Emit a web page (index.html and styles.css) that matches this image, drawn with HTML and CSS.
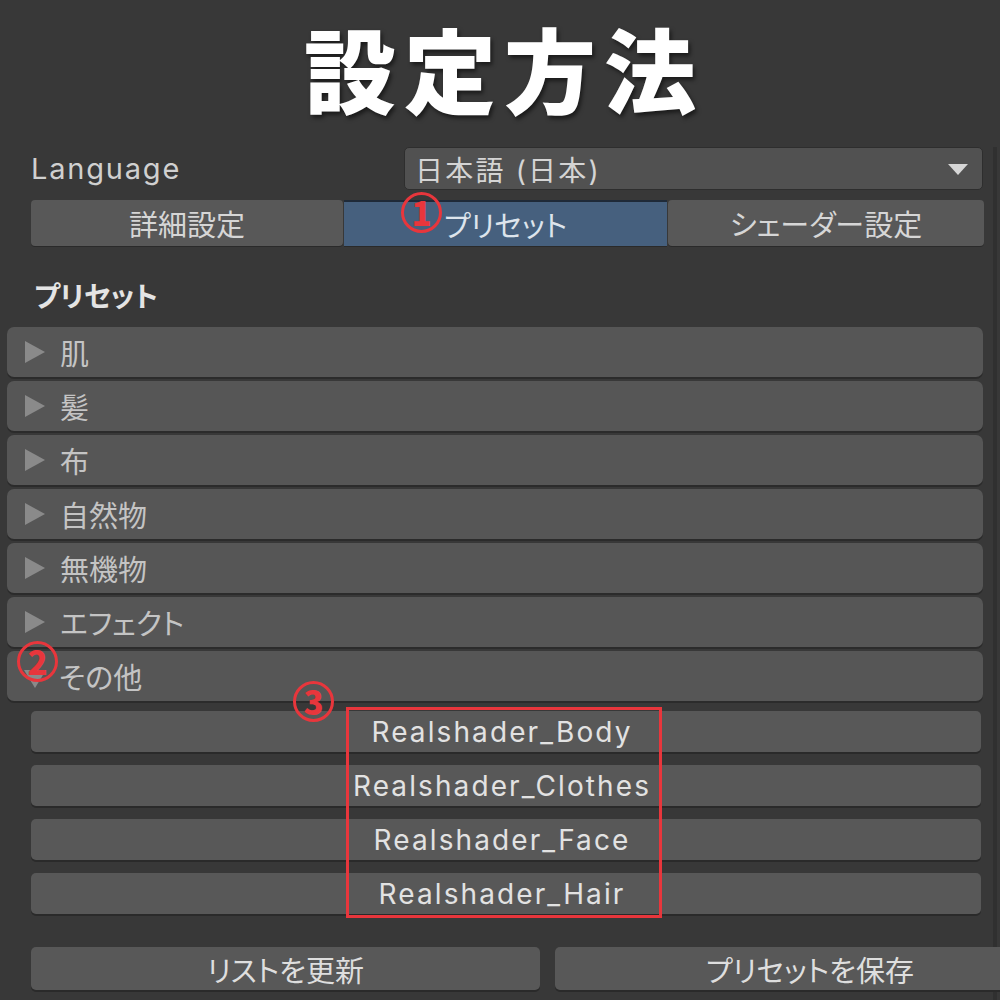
FILE: index.html
```html
<!DOCTYPE html>
<html lang="ja">
<head>
    <meta charset="UTF-8">
    <title>設定方法</title>
    <link rel="stylesheet" href="styles.css">
</head>
<body>
    <div class="page">
        <h1 class="title">設定方法</h1>

        <div class="inspector">
            <div class="lang-row">
                <span class="lang-label">Language</span>
                <div class="dropdown">
                    <span>日本語 (日本)</span>
                    <span class="caret"></span>
                </div>
            </div>

            <div class="tabs">
                <div class="tab">詳細設定</div>
                <div class="tab active">プリセット<span class="mark mark-1">1</span></div>
                <div class="tab">シェーダー設定</div>
            </div>

            <div class="section-title">プリセット</div>

            <div class="foldouts">
                <div class="foldout"><span class="arrow"></span>肌</div>
                <div class="foldout"><span class="arrow"></span>髪</div>
                <div class="foldout"><span class="arrow"></span>布</div>
                <div class="foldout"><span class="arrow"></span>自然物</div>
                <div class="foldout"><span class="arrow"></span>無機物</div>
                <div class="foldout"><span class="arrow"></span>エフェクト</div>
                <div class="foldout open"><span class="arrow"></span>その他<span class="mark mark-2">2</span></div>
            </div>

            <div class="presets">
                <div class="preset-btn">Realshader_Body</div>
                <div class="preset-btn">Realshader_Clothes</div>
                <div class="preset-btn">Realshader_Face</div>
                <div class="preset-btn">Realshader_Hair</div>
                <div class="highlight"><span class="mark mark-3">3</span></div>
            </div>

            <div class="actions">
                <div class="action-btn">リストを更新</div>
                <div class="action-btn">プリセットを保存</div>
            </div>
        </div>
    </div>
</body>
</html>
```

FILE: styles.css
```css
* {
    margin: 0;
    padding: 0;
    box-sizing: border-box;
}

html, body {
    width: 1000px;
    height: 1000px;
    overflow: hidden;
}

body {
    font-family: Inter, "Noto Sans CJK JP", sans-serif;
    font-feature-settings: "palt";
    background-color: #383838;
    color: #d2d2d2;
}

.page {
    width: 1000px;
    height: 1000px;
    overflow: hidden;
}

.title {
    height: 140px;
    padding-left: 8px;
    text-align: center;
    font-family: "Noto Sans CJK JP", sans-serif;
    font-feature-settings: normal;
    font-size: 92px;
    line-height: 1.45;
    font-weight: 900;
    letter-spacing: 8px;
    color: #ffffff;
    text-shadow: 2px 3px 4px rgba(0, 0, 0, 0.55);
}

.inspector {
    width: 997px;
    height: 860px;
    padding: 0 10px 0 7px;
    border-right: 4px solid #303030;
}

.lang-row {
    display: flex;
    align-items: center;
    margin: 7px 0 0 24px;
    height: 43px;
}

.lang-label {
    width: 373px;
    font-size: 29px;
    letter-spacing: 1.8px;
    color: #d0d0d0;
}

.dropdown {
    flex: 1;
    height: 43px;
    display: flex;
    align-items: center;
    justify-content: space-between;
    padding: 0 14px 0 10px;
    background: #515151;
    border: 1px solid #2e2e2e;
    border-radius: 5px;
    font-size: 28px;
    letter-spacing: 2.2px;
    color: #d4d4d4;
}

.caret {
    width: 0;
    height: 0;
    border-left: 10px solid transparent;
    border-right: 10px solid transparent;
    border-top: 11px solid #d6d6d6;
    margin-top: 2px;
}

.tabs {
    display: grid;
    grid-template-columns: 312px 323px 316px;
    gap: 1px;
    margin: 10px 0 0 24px;
    height: 46px;
}

.tab {
    position: relative;
    display: flex;
    align-items: center;
    justify-content: center;
    background: #585858;
    border-radius: 4px;
    font-size: 29px;
    color: #d6d6d6;
    box-shadow: 0 1px 0 #2a2a2a;
}

.tab.active {
    background: #46607e;
    border-radius: 0;
    border-top: 2px solid #1f2a38;
    color: #dde4ec;
}

.section-title {
    height: 81px;
    padding: 34px 0 0 27px;
    font-size: 28px;
    line-height: 34px;
    font-weight: 700;
    color: #e4e4e4;
}

.foldouts {
    display: flex;
    flex-direction: column;
    gap: 4px;
}

.foldout {
    position: relative;
    height: 50px;
    display: flex;
    align-items: center;
    padding-left: 18px;
    background: #565656;
    border-radius: 7px;
    box-shadow: 0 2px 0 #2b2b2b;
    font-size: 29px;
    color: #c4c4c4;
}

.arrow {
    width: 0;
    height: 0;
    border-top: 11px solid transparent;
    border-bottom: 11px solid transparent;
    border-left: 20px solid #8a8a8a;
    margin-right: 15px;
}

.foldout.open .arrow {
    border-left: 11px solid transparent;
    border-right: 11px solid transparent;
    border-top: 18px solid #8a8a8a;
    border-bottom: 0;
    margin: 6px 13px 0 -1px;
}

.presets {
    position: relative;
    display: flex;
    flex-direction: column;
    gap: 13px;
    margin: 10px 2px 0 24px;
}

.preset-btn {
    height: 41px;
    display: flex;
    align-items: center;
    justify-content: center;
    padding-right: 8px;
    background: #585858;
    border-radius: 5px;
    box-shadow: 0 2px 0 #2a2a2a;
    font-size: 28px;
    letter-spacing: 2.1px;
    color: #e2e2e2;
}

.highlight {
    position: absolute;
    left: 315px;
    top: -4px;
    width: 316px;
    height: 211px;
    border: 3px solid #e8363c;
}

.mark {
    position: absolute;
    width: 41px;
    height: 41px;
    display: flex;
    align-items: center;
    justify-content: center;
    border: 3px solid #e8363c;
    border-radius: 50%;
    font-family: "Noto Sans CJK JP", sans-serif;
    font-feature-settings: normal;
    font-size: 33px;
    font-weight: 900;
    line-height: 1;
    letter-spacing: 0;
    color: #e8363c;
}

.mark-1 {
    left: 57px;
    top: -10px;
}

.mark-2 {
    left: 10px;
    top: -10px;
}

.mark-3 {
    left: -56px;
    top: -29px;
}

.actions {
    display: grid;
    grid-template-columns: 509px 510px;
    gap: 15px;
    margin: 33px 0 0 24px;
}

.action-btn {
    height: 43px;
    display: flex;
    align-items: center;
    justify-content: center;
    background: #585858;
    border-radius: 5px;
    box-shadow: 0 2px 0 #2a2a2a;
    font-size: 29px;
    color: #dedede;
}
```
